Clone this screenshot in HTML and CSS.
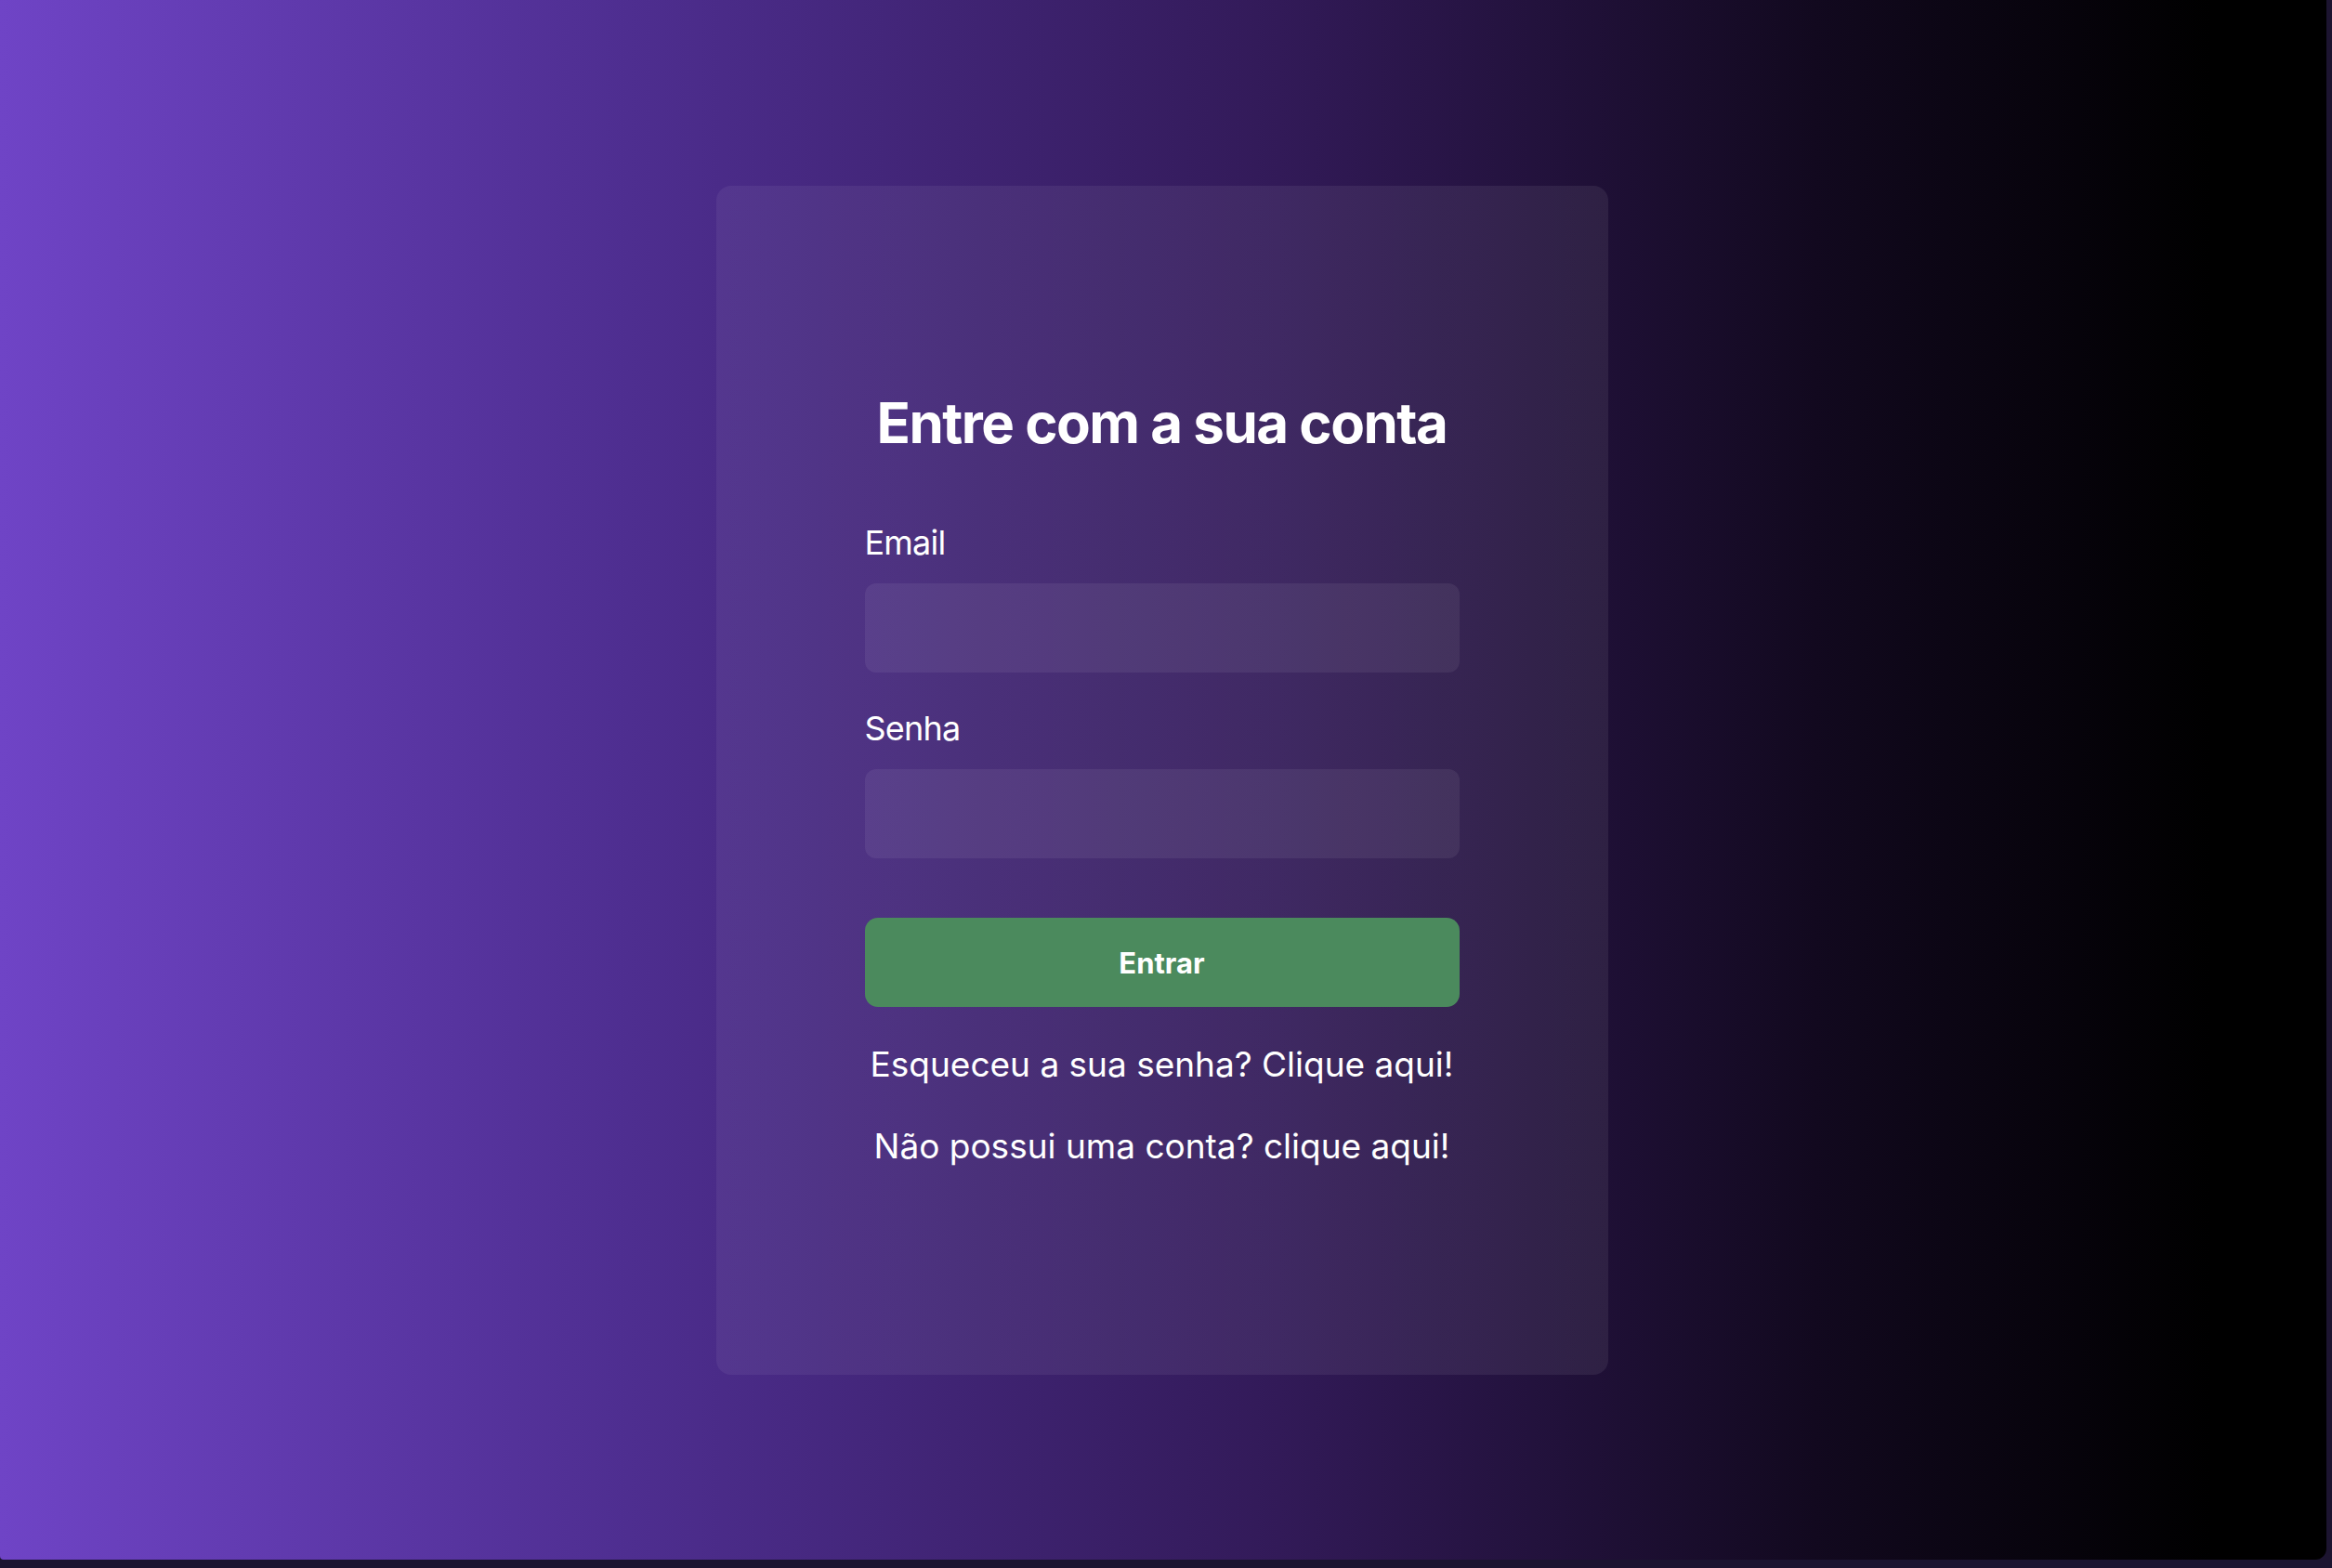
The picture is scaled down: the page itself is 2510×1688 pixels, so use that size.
FILE: index.html
```html
<!DOCTYPE html>
<html lang="pt-BR">
<head>
<meta charset="utf-8">
<title>Entrar</title>
<link rel="stylesheet" href="styles.css">
</head>
<body>
<main class="screen">
  <section class="card">
    <h1 class="title">Entre com a sua conta</h1>
    <form class="form">
      <label class="label" for="email">Email</label>
      <input class="input" id="email" type="email">
      <label class="label label-senha" for="senha">Senha</label>
      <input class="input" id="senha" type="password">
      <button class="button" type="button">Entrar</button>
    </form>
    <p class="link link-first">Esqueceu a sua senha? Clique aqui!</p>
    <p class="link">Não possui uma conta? clique aqui!</p>
  </section>
</main>
</body>
</html>
```
FILE: styles.css
```css
html, body {
  margin: 0;
  padding: 0;
  background: #1c1430;
}

body {
  width: 2510px;
  height: 1688px;
  overflow: hidden;
  font-family: Inter, "Noto Sans", "Liberation Sans", sans-serif;
  color: #ffffff;
}

.screen {
  width: 2504px;
  height: 1679px;
  display: flex;
  align-items: center;
  justify-content: center;
  background: linear-gradient(90deg, #6f44c6 0%, #4e2e90 27%, #321a58 55%, #12091f 78%, #000000 95%);
  border-bottom-right-radius: 12px;
  border-bottom-left-radius: 4px;
}

.card {
  width: 960px;
  height: 1280px;
  box-sizing: border-box;
  margin-left: -3px;
  padding-bottom: 4px;
  border-radius: 16px;
  background: linear-gradient(90deg, rgba(255, 255, 255, 0.055), rgba(255, 255, 255, 0.07));
  display: flex;
  flex-direction: column;
  align-items: center;
  justify-content: center;
}

.title {
  margin: 0;
  font-size: 60px;
  line-height: 72px;
  font-weight: 700;
  letter-spacing: -1.5px;
}

.form {
  width: 640px;
  display: flex;
  flex-direction: column;
  margin-top: 70px;
}

.label {
  font-size: 36px;
  line-height: 46px;
  font-weight: 400;
  margin-bottom: 21px;
  letter-spacing: -0.8px;
}

.label-senha {
  margin-top: 37px;
}

.input {
  height: 96px;
  box-sizing: border-box;
  border: none;
  border-radius: 12px;
  background: rgba(255, 255, 255, 0.065);
  outline: none;
  padding: 0 24px;
  color: #fff;
  font-size: 32px;
}

.button {
  margin-top: 64px;
  height: 96px;
  border: none;
  border-radius: 14px;
  background: #4b8a5d;
  color: #fff;
  font-family: Inter, "Noto Sans", sans-serif;
  font-size: 31px;
  font-weight: 700;
}

.link {
  margin: 44px 0 0;
  font-size: 37px;
  line-height: 44px;
  letter-spacing: 0;
}

.link-first {
  margin-top: 40px;
}
```
